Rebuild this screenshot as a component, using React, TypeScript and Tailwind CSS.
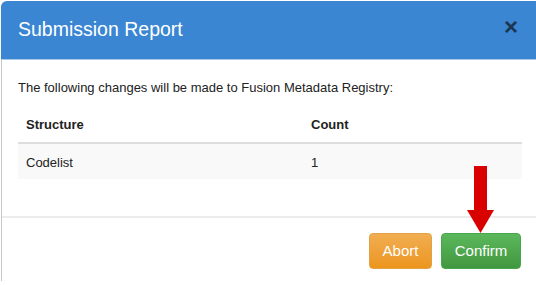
export default function App() {
  return (
    <div className="w-[536px] h-[285px] overflow-hidden bg-white" style={{ fontFamily: '"Liberation Sans", Arial, sans-serif' }}>
      <div className="relative ml-px mt-px w-[540px] h-[280px] rounded-t-[6px] border-l border-[#c8c8c8] bg-white flex flex-col">
        <div className="h-[59px] -ml-px rounded-t-[6px] bg-[#3a86d3] border-b border-[#a9c9ea] flex items-center justify-between pl-[17px] pr-[15px]">
          <h2 className="text-[19.5px] text-white leading-none">Submission Report</h2>
          <span className="text-[#1c3550] text-[24px] font-bold leading-none mr-[8px] -mt-[7px]">×</span>
        </div>
        <div className="pl-[16px] pt-[20px] w-[520px]">
          <p className="text-[13px] text-[#222] leading-[16px]">The following changes will be made to Fusion Metadata Registry:</p>
          <table className="mt-[12px] w-[504px] text-[13px] text-[#222]">
            <thead>
              <tr className="border-b-2 border-[#dddddd]">
                <th className="text-left font-bold pl-[8px] h-[35px]">Structure</th>
                <th className="text-left font-bold pl-[0px] w-[211px] h-[35px]">Count</th>
              </tr>
            </thead>
            <tbody>
              <tr className="bg-[#f9f9f9]">
                <td className="pl-[8px] h-[36px] pt-[2px]">Codelist</td>
                <td className="h-[36px] pt-[2px]">1</td>
              </tr>
            </tbody>
          </table>
        </div>
        <div className="mt-[37px] border-t-2 border-[#ececec] w-[534px] flex justify-end gap-[9px] pt-[15px] pr-[15px]">
          <button className="w-[63px] h-[36px] rounded-[4px] text-white text-[15px] bg-gradient-to-b from-[#f1ae50] to-[#ec951b] border border-[#e3a044]">Abort</button>
          <button className="w-[80px] h-[36px] rounded-[4px] text-white text-[15px] bg-gradient-to-b from-[#5cb85c] to-[#41973f] border border-[#4aa64a]">Confirm</button>
        </div>
        <svg className="absolute left-[463px] top-[164px]" width="30" height="68" viewBox="0 0 30 68">
          <rect x="9" y="1" width="13" height="45" fill="#d90000" />
          <polygon points="2,45 29,45 15.5,68" fill="#d90000" />
        </svg>
      </div>
    </div>
  );
}
